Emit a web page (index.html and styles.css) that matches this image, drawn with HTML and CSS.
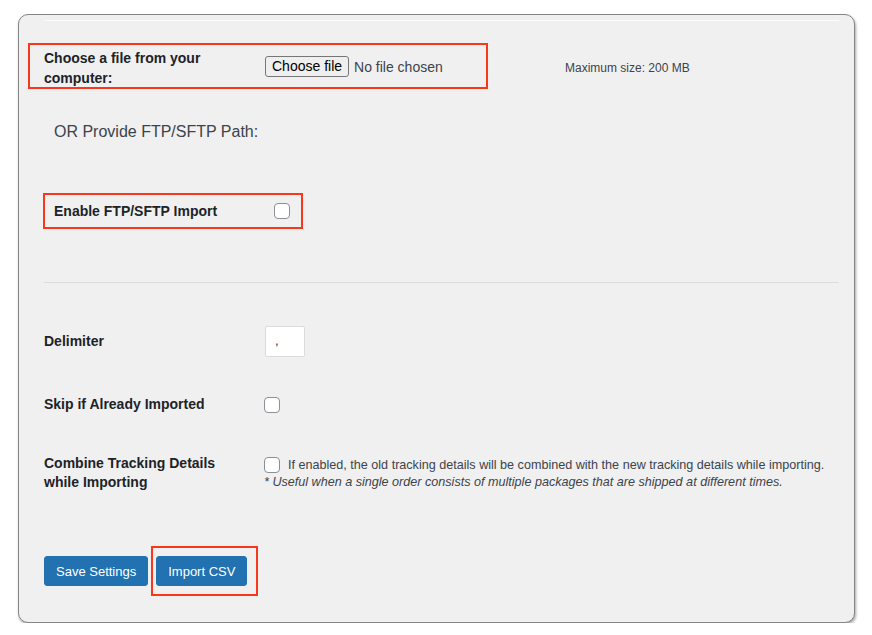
FILE: index.html
```html
<!DOCTYPE html>
<html lang="en">
<head>
<meta charset="utf-8">
<title>Import CSV</title>
<link rel="stylesheet" href="styles.css">
</head>
<body>
<div class="panel">
  <div class="topline"></div>

  <div class="row-file">
    <div class="mark mark-file">
      <div class="label label-file">Choose a file from your computer:</div>
      <div class="file">
        <span class="file-btn">Choose file</span>
        <span class="file-name">No file chosen</span>
      </div>
    </div>
    <div class="max-size">Maximum size: 200 MB</div>
  </div>

  <div class="or-title">OR Provide FTP/SFTP Path:</div>

  <div class="mark mark-ftp">
    <div class="label label-ftp">Enable FTP/SFTP Import</div>
    <span class="check"></span>
  </div>

  <div class="divider"></div>

  <div class="row row-delim">
    <div class="label">Delimiter</div>
    <div class="text-input">,</div>
  </div>

  <div class="row row-skip">
    <div class="label">Skip if Already Imported</div>
    <span class="check"></span>
  </div>

  <div class="row row-combine">
    <div class="label label-combine">Combine Tracking Details while Importing</div>
    <div class="combine-field">
      <div class="combine-line">
        <span class="check"></span>
        <span class="desc">If enabled, the old tracking details will be combined with the new tracking details while importing.</span>
      </div>
      <div class="note">* Useful when a single order consists of multiple packages that are shipped at different times.</div>
    </div>
  </div>

  <div class="actions">
    <button class="btn" type="button">Save Settings</button>
    <div class="mark mark-btn">
      <button class="btn" type="button">Import CSV</button>
    </div>
  </div>
</div>
</body>
</html>
```

FILE: styles.css
```css
* { box-sizing: border-box; }

html, body {
  margin: 0;
  padding: 0;
  background: #ffffff;
}

body {
  font-family: "Liberation Sans", Arial, Helvetica, sans-serif;
  color: #1d2327;
  font-size: 14px;
}

.panel {
  margin: 14px 0 0 18px;
  width: 837px;
  background: #f0f0f1;
  border: 1px solid #858585;
  border-radius: 10px;
  box-shadow: 1px 2px 3px rgba(0, 0, 0, 0.35);
  padding: 5px 15px 26px 25px;
}

.topline {
  height: 1px;
  background: #fbfbfb;
}

.mark {
  border: 2px solid #f8371c;
}

.label {
  font-weight: 700;
  font-size: 14px;
  line-height: 19px;
  color: #1d2327;
}

/* Row 1: file chooser */
.row-file {
  display: flex;
  align-items: center;
  margin-top: 22px;
  margin-left: -16px;
}

.mark-file {
  width: 460px;
  height: 46px;
  display: flex;
  align-items: center;
  padding-left: 14px;
}

.label-file {
  width: 221px;
  line-height: 20px;
  margin-top: 3px;
}

.file {
  display: flex;
  align-items: center;
  gap: 5px;
  margin-top: 1px;
}

.file-btn {
  display: inline-block;
  height: 21px;
  line-height: 19px;
  padding: 0 6px;
  border: 1px solid #767676;
  border-radius: 3px;
  background: #efefef;
  font-size: 14px;
  color: #000;
}

.file-name {
  font-size: 14px;
  color: #3c434a;
}

.max-size {
  margin-left: 77px;
  margin-top: 3px;
  font-size: 12px;
  color: #3c434a;
}

/* OR title */
.or-title {
  margin-top: 33px;
  margin-left: 10px;
  font-size: 16px;
  line-height: 20px;
  color: #3c434a;
}

/* FTP enable */
.mark-ftp {
  margin-top: 51px;
  margin-left: -1px;
  width: 260px;
  height: 36px;
  display: flex;
  align-items: center;
  padding-left: 9px;
}

.label-ftp {
  width: 220px;
}

.check {
  display: inline-block;
  width: 16px;
  height: 16px;
  flex: none;
  background: #ffffff;
  border: 1px solid #8c8f94;
  border-radius: 4px;
}

.divider {
  margin-top: 53px;
  height: 1px;
  background: #dcdcde;
}

.row {
  display: flex;
  align-items: center;
}

.row > .label {
  width: 220px;
  flex: none;
}

.row-delim {
  margin-top: 43px;
}

.row-delim > .label {
  width: 221px;
}

.text-input {
  width: 40px;
  height: 31px;
  background: #ffffff;
  border: 1px solid #dcdcde;
  border-radius: 2px;
  padding: 6px 0 0 9px;
  font-size: 13px;
  color: #2c3338;
}

.row-skip {
  margin-top: 38px;
}

.row-combine {
  margin-top: 40px;
  align-items: flex-start;
}

.row > .label-combine {
  line-height: 19px;
  padding-right: 24px;
}

.combine-field {
  flex: 1;
  min-width: 0;
  padding-top: 2px;
}

.combine-line {
  display: flex;
  align-items: center;
  gap: 8px;
  height: 18px;
}

.desc {
  font-size: 12.6px;
  line-height: 18px;
  white-space: nowrap;
  color: #3c434a;
}

.note {
  font-size: 12.6px;
  line-height: 16px;
  font-style: italic;
  white-space: nowrap;
  color: #3c434a;
}

/* Buttons */
.actions {
  margin-top: 54px;
  display: flex;
  align-items: center;
  gap: 3px;
}

.btn {
  font-family: "Liberation Sans", Arial, Helvetica, sans-serif;
  font-size: 13px;
  font-weight: 500;
  height: 30px;
  padding: 0 11px;
  border: 1px solid #2271b1;
  border-radius: 3px;
  background: #2271b1;
  color: #ffffff;
  cursor: pointer;
}

.mark-btn {
  padding: 8px 9px 8px 3px;
}
```
